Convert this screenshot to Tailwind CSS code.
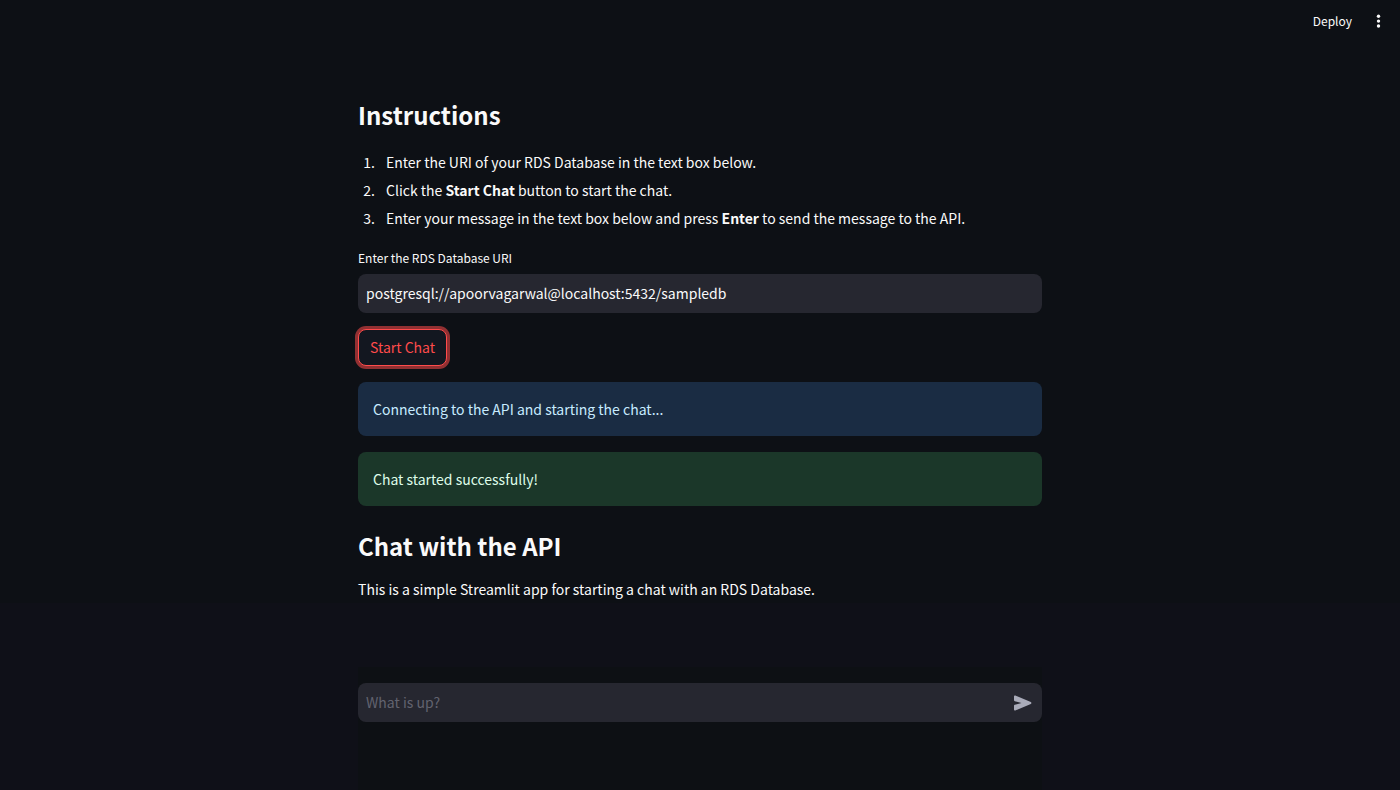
<!DOCTYPE html>
<html lang="en">
<head>
  <meta charset="UTF-8">
  <title>Chat with the API</title>
  <meta name="viewport" content="width=device-width, initial-scale=1.0">
  <script src="https://cdn.jsdelivr.net/npm/@tailwindcss/browser@4"></script>
</head>
<body class="flex min-h-screen flex-col bg-[#0d1015] font-['Noto_Sans_CJK_SC',sans-serif] text-sm leading-6 text-[#fafafa]">

  <!-- Toolbar -->
  <header class="flex h-[42px] shrink-0 items-center justify-end gap-2 pr-3">
    <button type="button" class="px-2 text-xs">Deploy</button>
    <button type="button" aria-label="Main menu" class="flex size-5 items-center justify-center">
      <svg class="size-5" viewBox="0 0 20 20" fill="currentColor" aria-hidden="true">
        <circle cx="10.5" cy="5.2" r="1.7"/>
        <circle cx="10.5" cy="10.1" r="1.7"/>
        <circle cx="10.5" cy="15" r="1.7"/>
      </svg>
    </button>
  </header>

  <main class="mx-auto w-full max-w-[716px] grow px-4 pt-[53px]">
    <h2 class="text-2xl leading-10 font-bold">Instructions</h2>

    <ol class="mt-[13px] list-decimal pl-5 leading-7">
      <li class="pl-2">Enter the URI of your RDS Database in the text box below.</li>
      <li class="pl-2">Click the <strong>Start Chat</strong> button to start the chat.</li>
      <li class="pl-2">Enter your message in the text box below and press <strong>Enter</strong> to send the message to the API.</li>
    </ol>

    <label for="uri" class="mt-4 block text-xs leading-5">Enter the RDS Database URI</label>
    <input id="uri" type="text" value="postgresql://apoorvagarwal@localhost:5432/sampledb" class="mt-[6px] block h-[39px] w-full rounded-lg bg-[#262730] px-2 pb-[2px] outline-none">

    <button type="button" class="mt-4 block h-[37px] rounded-lg border border-[#ff4b4b] bg-[#131720] px-[11px] pb-[2px] text-[#ff4b4b] ring-3 ring-[#ff4b4b]/55">Start Chat</button>

    <div role="status" class="mt-4 rounded-lg bg-[#1a2c43] px-[15px] py-[15px] text-[#c7ebff]">Connecting to the API and starting the chat...</div>
    <div role="status" class="mt-4 rounded-lg bg-[#1b3729] px-[15px] py-[15px] text-[#dffde9]">Chat started successfully!</div>

    <h2 class="mt-5 text-2xl leading-10 font-bold">Chat with the API</h2>
    <p class="mt-[11px]">This is a simple Streamlit app for starting a chat with an RDS Database.</p>
  </main>

  <!-- Chat input -->
  <footer class="bg-[#0f1018] px-4 pt-16">
    <div class="mx-auto w-full max-w-[684px] bg-[#0d1014] pt-4 pb-17">
      <form class="flex h-[39px] items-center rounded-lg bg-[#262730] pr-2">
        <input type="text" aria-label="Message" placeholder="What is up?" class="h-full min-w-0 grow px-2 pb-[2px] outline-none placeholder:text-[#62636f]">
        <button type="button" aria-label="Send message" class="flex size-6 items-center justify-center text-[#a9abb9]">
          <svg class="size-6" viewBox="0 0 24 24" fill="currentColor" aria-hidden="true">
            <path d="M4 5.51v3.71c0 .46.31.86.76.97L11.5 12l-6.74 1.81c-.45.11-.76.51-.76.97v3.71c0 .72.73 1.2 1.39.92l15.42-6.49c.82-.34.82-1.5 0-1.84L5.39 4.58C4.73 4.31 4 4.8 4 5.51z"/>
          </svg>
        </button>
      </form>
    </div>
  </footer>

</body>
</html>
